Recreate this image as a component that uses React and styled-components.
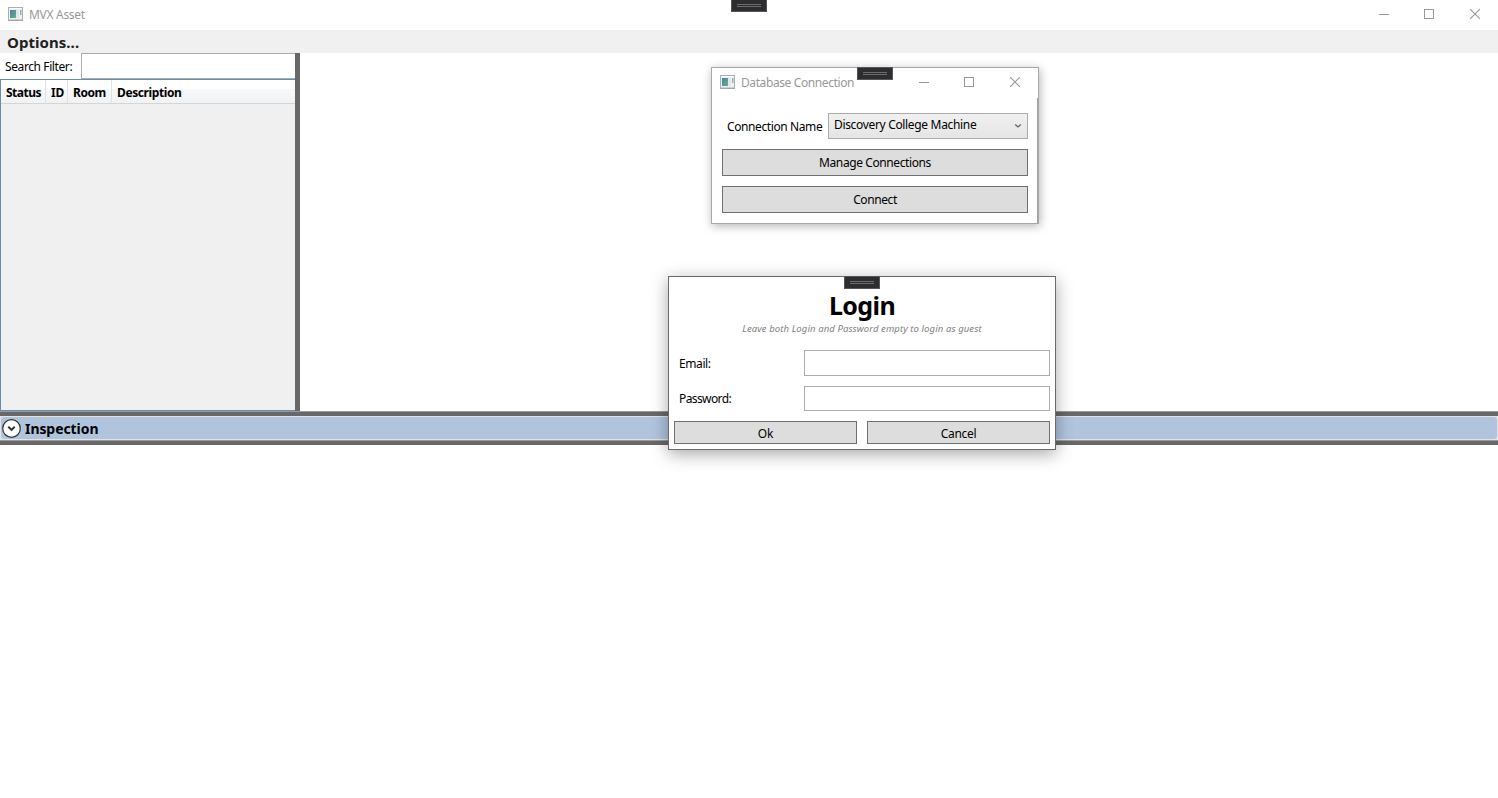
import React from "react";
import styled, { createGlobalStyle } from "styled-components";

const GlobalStyle = createGlobalStyle`
  * { box-sizing: border-box; }
  html, body { margin: 0; padding: 0; height: 100%; overflow: hidden; background: #fff; }
  body { font-family: "Noto Sans", "Open Sans", sans-serif; font-size: 12px; color: #000; }
  button, input { font: inherit; color: inherit; margin: 0; border-radius: 0; outline: none; }
`;

const Label = styled.span`
  display: block;
  white-space: nowrap;
  font-size: ${(p) => p.$size || 12}px;
  line-height: ${(p) => p.$line || 16}px;
  font-weight: ${(p) => (p.$bold ? 700 : 400)};
  font-style: ${(p) => (p.$italic ? "italic" : "normal")};
  color: ${(p) => p.$color || "#000"};
  letter-spacing: ${(p) => p.$track ?? -0.4}px;
`;

const Desktop = styled.main`
  width: 1498px;
  height: 798px;
  position: relative;
  display: flex;
  flex-direction: column;
  background: #fff;
`;

const TitleBar = styled.header`
  height: 30px;
  flex: none;
  display: flex;
  align-items: flex-start;
  padding: 7px 0 0 8px;
`;

const TitleText = styled(Label)`
  margin-left: 6px;
  flex: 1;
`;

const Caption = styled.div`
  display: flex;
  gap: 35px;
  margin: 2px 18px 0 0;
  svg { display: block; }
  svg:last-child { margin-left: 1px; }
`;

const Grip = styled.div`
  position: absolute;
  top: ${(p) => p.$top}px;
  left: ${(p) => p.$left}px;
  width: 36px;
  height: 13px;
  background: #2d2d30;
  border: 1px solid #55555a;
  display: flex;
  flex-direction: column;
  align-items: center;
  justify-content: center;
  gap: 1px;
  &::before, &::after { content: ""; width: 24px; height: 1px; background: #6c6c6c; }
`;

const MenuBar = styled.nav`
  height: 23px;
  flex: none;
  background: #f0f0f0;
  padding: 2px 0 0 7px;
`;

const Workspace = styled.section`
  height: 358px;
  flex: none;
  display: flex;
`;

const SidePanel = styled.aside`
  width: 300px;
  border-right: 5px solid #686868;
  display: flex;
  flex-direction: column;
`;

const SearchRow = styled.label`
  height: 26px;
  flex: none;
  display: flex;
  align-items: flex-start;
  padding-left: 5px;
`;

const SearchInput = styled.input`
  width: 214px;
  height: 26px;
  margin-left: auto;
  border: 1px solid #abadb3;
  border-right: 0;
  background: #fff;
`;

const AssetList = styled.div`
  flex: 1;
  background: #f0f0f0;
  border: 1px solid #688caf;
  border-right: 0;
`;

const ListHeader = styled.div`
  display: flex;
  height: 24px;
  background: linear-gradient(#fff 0 40%, #f7f8fa 41%, #f1f2f4 100%);
  border-bottom: 1px solid #d5d5d5;
`;

const HeaderCell = styled.div`
  width: ${(p) => p.$width}px;
  padding: 5px 0 0 5px;
  border-right: ${(p) => (p.$last ? 0 : 1)}px solid #dfe1e4;
  overflow: hidden;
`;

const Splitter = styled.div`
  height: 5px;
  flex: none;
  background: #686868;
  border-top: 1px solid #9a9a9a;
`;

const InspectionBar = styled.div`
  height: 24px;
  flex: none;
  background: #e3e3e3;
  padding: 1px;
`;

const InspectionHead = styled.div`
  height: 22px;
  border-radius: 3px;
  background: #b0c4de;
  display: flex;
  align-items: center;
  padding-left: 1px;
  gap: 4px;
`;

const Dialog = styled.section`
  position: absolute;
  left: ${(p) => p.$left}px;
  top: ${(p) => p.$top}px;
  width: ${(p) => p.$width}px;
  height: ${(p) => p.$height}px;
  background: #fff;
  border: 1px solid ${(p) => p.$edge};
  box-shadow: ${(p) => p.$shadow};
`;

const ConnectionBody = styled.div`
  display: flex;
  flex-direction: column;
  gap: 10px;
  height: 125px;
  padding: 15px 9px 0 10px;
  border-right: 1px solid #a3a3a3;
`;

const ConnectionRow = styled.div`
  display: flex;
  justify-content: space-between;
  height: 26px;
  padding-left: 5px;
`;

const Combo = styled.div`
  width: 200px;
  height: 26px;
  border: 1px solid #acacac;
  background: linear-gradient(#f0f0f0, #e5e5e5);
  display: flex;
  justify-content: space-between;
  padding: 3px 5px 0 5px;
  svg { margin-top: 6px; }
`;

const PushButton = styled.button`
  height: ${(p) => p.$height}px;
  flex: ${(p) => (p.$fill ? 1 : "none")};
  background: #ddd;
  border: 1px solid #707070;
  padding: ${(p) => p.$pad || 0};
  display: flex;
  align-items: center;
  justify-content: center;
`;

const LoginHead = styled.div`
  display: flex;
  flex-direction: column;
  align-items: center;
  height: 73px;
  padding-top: 11px;
  gap: 1px;
`;

const Field = styled.label`
  display: flex;
  justify-content: space-between;
  padding: 0 5px 0 10px;
  height: ${(p) => p.$height}px;
  margin-bottom: 10px;
`;

const FieldInput = styled.input`
  width: 246px;
  height: 100%;
  border: 1px solid #abadb3;
  background: #fff;
`;

const ButtonRow = styled.div`
  display: flex;
  gap: 10px;
  padding: 0 5px;
`;

const AppIcon = () => (
  <svg width="15" height="14" viewBox="0 0 15 14">
    <defs>
      <linearGradient id="pane" x1="0" y1="0" x2="1" y2="1">
        <stop offset="0" stopColor="#4d7fae" />
        <stop offset="1" stopColor="#63b27c" />
      </linearGradient>
    </defs>
    <rect x="0.5" y="0.5" width="14" height="12.5" fill="#eef0f2" stroke="#a9b0b6" />
    <path d="M0 13.5H15" stroke="#a2a8ad" />
    <rect x="2" y="3" width="6" height="8" fill="url(#pane)" />
    <rect x="8" y="3" width="3" height="8" fill="#e0e7ea" />
    <rect x="12" y="3" width="1.5" height="5" fill="#87b7ab" />
    <path d="M2 1.5H13" stroke="#fff" />
  </svg>
);

const CaptionButtons = () => (
  <Caption>
    <svg width="10" height="11" viewBox="0 0 10 11"><path d="M0 5.5H10" stroke="#999" /></svg>
    <svg width="10" height="10" viewBox="0 0 10 10"><rect x="0.5" y="0.5" width="9" height="9" fill="none" stroke="#999" /></svg>
    <svg width="10" height="10" viewBox="0 0 10 10"><path d="M0 0L10 10M10 0L0 10" stroke="#999" strokeWidth="1.1" /></svg>
  </Caption>
);

const ExpanderIcon = () => (
  <svg width="19" height="19" viewBox="0 0 19 19">
    <circle cx="9.5" cy="9.5" r="8.8" fill="#fff" stroke="#333" strokeWidth="1.2" />
    <path d="M6.3 7.8L9.5 10.9L12.7 7.8" fill="none" stroke="#333" strokeWidth="2" />
  </svg>
);

const ComboArrow = () => (
  <svg width="8" height="6" viewBox="0 0 8 6">
    <path d="M1.2 1.5L4 4L6.8 1.5" fill="none" stroke="#606060" strokeWidth="1.3" />
  </svg>
);

const InspectionTitle = styled(Label)`
  padding-top: 1px;
`;

export default function App() {
  return (
    <>
      <GlobalStyle />
      <Desktop>
        <TitleBar>
          <AppIcon />
          <TitleText $color="#999" $track={-0.3}>MVX Asset</TitleText>
          <CaptionButtons />
        </TitleBar>
        <MenuBar>
          <Label $bold $size={15} $line={20} $color="#212121" $track={0.05}>Options...</Label>
        </MenuBar>
        <Workspace>
          <SidePanel>
            <SearchRow>
              <Label $line={28}>Search Filter:</Label>
              <SearchInput />
            </SearchRow>
            <AssetList>
              <ListHeader>
                <HeaderCell $width={45}><Label $bold $track={-0.5}>Status</Label></HeaderCell>
                <HeaderCell $width={22}><Label $bold $track={-0.2}>ID</Label></HeaderCell>
                <HeaderCell $width={44}><Label $bold $track={-0.42}>Room</Label></HeaderCell>
                <HeaderCell $width={183} $last><Label $bold>Description</Label></HeaderCell>
              </ListHeader>
            </AssetList>
          </SidePanel>
        </Workspace>
        <Splitter />
        <InspectionBar>
          <InspectionHead>
            <ExpanderIcon />
            <InspectionTitle $bold $size={14} $line={20} $track={-0.07}>Inspection</InspectionTitle>
          </InspectionHead>
        </InspectionBar>
        <Splitter />

        <Grip $left={731} $top={-1} />

        <Dialog $left={711} $top={67} $width={328} $height={157} $edge="#a8a8a8" $shadow="1px 2px 9px rgba(0,0,0,.3)">
          <TitleBar>
            <AppIcon />
            <TitleText $color="#999">Database Connection</TitleText>
            <CaptionButtons />
          </TitleBar>
          <ConnectionBody>
            <ConnectionRow>
              <Label $line={28}>Connection Name</Label>
              <Combo>
                <Label $track={-0.33}>Discovery College Machine</Label>
                <ComboArrow />
              </Combo>
            </ConnectionRow>
            <PushButton $height={27}><Label>Manage Connections</Label></PushButton>
            <PushButton $height={27}><Label>Connect</Label></PushButton>
          </ConnectionBody>
          <Grip $left={145} $top={-1} />
        </Dialog>

        <Dialog $left={668} $top={276} $width={388} $height={174} $edge="#6b6b6b" $shadow="0 4px 16px rgba(0,0,0,.35)">
          <LoginHead>
            <Label $bold $size={25} $line={34} $track={-0.6}>Login</Label>
            <Label $italic $size={9.5} $line={12} $color="#808080" $track={0.1}>Leave both Login and Password empty to login as guest</Label>
          </LoginHead>
          <Field $height={26}>
            <Label $line={28}>Email:</Label>
            <FieldInput />
          </Field>
          <Field $height={25}>
            <Label $line={25} $track={-0.6}>Password:</Label>
            <FieldInput type="password" />
          </Field>
          <ButtonRow>
            <PushButton $fill $height={23} $pad="2px 0 0"><Label $track={-0.2}>Ok</Label></PushButton>
            <PushButton $fill $height={23} $pad="2px 0 0"><Label $track={-0.3}>Cancel</Label></PushButton>
          </ButtonRow>
          <Grip $left={175} $top={-1} />
        </Dialog>
      </Desktop>
    </>
  );
}
